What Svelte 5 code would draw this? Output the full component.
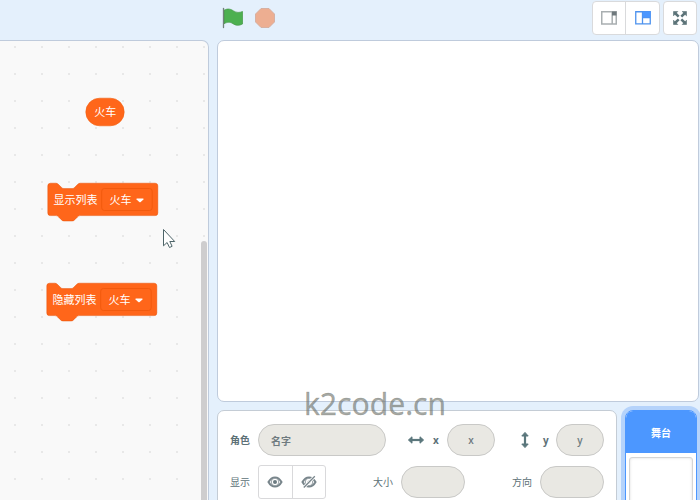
<script>
  const blocks = [
    { x: 47.8, y: 183.2, label: '显示列表', value: '火车' },
    { x: 46.8, y: 283.2, label: '隐藏列表', value: '火车' }
  ];
  const notchBlock =
    'M0,4 A4,4 0 0 1 4,0 H12 c2,0 3,1 4,2 l4,4 c1,1 2,2 4,2 h12 c2,0 3,-1 4,-2 l4,-4 c1,-1 2,-2 4,-2 H159 a4,4 0 0 1 4,4 v40 a4,4 0 0 1 -4,4 H48 c-2,0 -3,1 -4,2 l-4,4 c-1,1 -2,2 -4,2 h-12 c-2,0 -3,-1 -4,-2 l-4,-4 c-1,-1 -2,-2 -4,-2 H4 a4,4 0 0 1 -4,-4 z';
</script>

<div class="app">
  <section class="left">
    <div class="workspace">
      <svg class="canvas" width="208" height="459" viewBox="0 41 208 459">
        <defs>
          <pattern id="dots" x="14" y="46" width="27" height="27" patternUnits="userSpaceOnUse">
            <rect width="2" height="2" fill="#e8e8e8" />
          </pattern>
        </defs>
        <rect y="41" width="208" height="459" fill="url(#dots)" />
        <rect x="85.8" y="98.2" width="38.4" height="27.600" rx="13.8" fill="#ff661a" stroke="#f2600f" stroke-width=".6" />
        <text x="94.300" y="116">火车</text>
        {#each blocks as b}
          <g transform="translate({b.x} {b.y})">
            <path d={notchBlock} transform="scale(.675)" fill="#ff661a" stroke="#e64d00" stroke-width=".7" />
            <text x="5.6" y="21">{b.label}</text>
            <rect x="53.9" y="5.3" width="50.5" height="22" rx="2.7" fill="#ff661a" stroke="#f25a0e" />
            <text x="61.8" y="21">{b.value}</text>
            <path d="M89 15.2h6.4q.8.5.2 1.2l-2.7 2.5q-.7.5-1.4 0l-2.7-2.5q-.5-.7.2-1.2z" fill="#fff" />
          </g>
        {/each}
        <rect x="201" y="241" width="6" height="270" rx="3" fill="#cecdce" />
        <path d="M163.5 229.5v16.3l3.6-3.3 2.4 5 2.6-1.2-2.3-4.8h4.9z" fill="#fff" stroke="#4d6468" />
      </svg>
    </div>
  </section>

  <section class="right">
    <header>
      <div class="controls">
        <svg width="22" height="22" viewBox="0 0 22 22">
          <path d="M2 3.2C6 1.2 8.500 2 11.500 3.900s6 1.900 9 .6v12.500c-3.500 1.900-6.500 1.700-9.500-.3s-5.500-1.700-9 0z" fill="#4cb050" stroke="#459645" stroke-width=".7" />
          <path d="M1.500 1.500v19" stroke="#71817a" stroke-width="1.300" stroke-linecap="round" />
        </svg>
        <svg width="22" height="22" viewBox="0 0 22 22">
          <path d="M7 1.500h8L20.500 7v8L15 20.500H7L1.500 15V7z" fill="#edae91" stroke="#d1aa99" stroke-width=".8" stroke-linejoin="round" />
        </svg>
      </div>
      <div class="sizes">
        <div class="group">
          <button class="first" aria-label="小舞台">
            <svg width="16" height="14" viewBox="0 0 16 14">
              <path d="M.75.75h14.500v12.200H.75zM11.200.75v12.200" fill="none" stroke="#a9afb1" stroke-width="1.500" />
              <path d="M11 .5h4.500v4H11z" fill="#6f797d" />
            </svg>
          </button>
          <button aria-label="大舞台">
            <svg width="16" height="14" viewBox="0 0 16 14">
              <path d="M.75.75h14.500v12.200H.75zM7.500.75v12.200M7.500 6.500h8" fill="none" stroke="#4d92ee" stroke-width="1.300" />
              <path d="M7.500.5h8v6h-8z" fill="#4c97ff" />
            </svg>
          </button>
        </div>
        <div class="group">
          <button class="full" aria-label="全屏">
            <svg width="14" height="14" viewBox="0 0 14 14">
              <g fill="#5d7479" stroke="#5d7479">
                <path d="M2 2l3.700 3.700M12 2L8.300 5.700M2 12l3.700-3.700M12 12L8.300 8.300" stroke-width="2.500" />
                <path d="M.5.5h4.300l-4.300 4.300zM13.500.5v4.300L9.200.5zM.5 13.500V9.200l4.300 4.300zM13.500 13.500H9.200l4.300-4.300z" stroke-width=".6" />
              </g>
            </svg>
          </button>
        </div>
      </div>
    </header>

    <div class="stage"></div>

    <div class="bottom">
      <div class="sprite">
        <div class="row">
          <b class="lab">角色</b>
          <div class="field name">名字</div>
          <svg class="horiz" width="18" height="12" viewBox="0 0 18 12">
            <path d="M4 6h10" stroke="#5b777c" stroke-width="2.200" />
            <path d="M1.400 6L5 2.800v6.400zM16.600 6L13 2.800v6.400z" fill="#5b777c" stroke="#5b777c" stroke-linejoin="round" />
          </svg>
          <b class="axis">x</b>
          <div class="field small">x</div>
          <svg class="vert" width="12" height="18" viewBox="0 0 12 18">
            <path d="M6 4v10" stroke="#5b777c" stroke-width="2.200" />
            <path d="M6 1.400L2.800 5h6.400zM6 16.600L2.800 13h6.400z" fill="#5b777c" stroke="#5b777c" stroke-linejoin="round" />
          </svg>
          <b class="axis y">y</b>
          <div class="field small">y</div>
        </div>
        <div class="row second">
          <span class="lab">显示</span>
          <div class="eyes">
            <span>
              <svg width="16" height="14" viewBox="0 0 16 14">
                <path d="M1.500 7Q4 2.400 8 2.400T14.500 7Q12 11.600 8 11.600T1.500 7z" fill="none" stroke="#78858b" stroke-width="2" />
                <circle cx="8" cy="7" r="3.800" fill="#fff" stroke="#78858b" stroke-width=".8" />
                <circle cx="8" cy="7" r="2" fill="#6c7b81" />
              </svg>
            </span>
            <span>
              <svg width="16" height="14" viewBox="0 0 16 14">
                <path d="M1.500 7Q4 2.400 8 2.400T14.500 7Q12 11.600 8 11.600T1.500 7z" fill="none" stroke="#78858b" stroke-width="2" />
                <circle cx="8" cy="7" r="3.800" fill="#fff" stroke="#78858b" stroke-width=".8" />
                <circle cx="8" cy="7" r="1.500" fill="#6c7b81" />
                <path d="M3 12.300L13.600 1.500" stroke="#fff" stroke-width="3" />
                <path d="M2.800 12.500L13.800 1.300" stroke="#78858b" stroke-width="1.300" />
              </svg>
            </span>
          </div>
          <span class="lab size">大小</span>
          <div class="field mid"></div>
          <span class="lab dir">方向</span>
          <div class="field mid"></div>
        </div>
      </div>
      <div class="selector">
        <div class="title">舞台</div>
        <div class="thumb"></div>
      </div>
    </div>
    <div class="mark">k2code.cn</div>
  </section>
</div>

<style>
  :global(body) { margin: 0; overflow: hidden; }
  .app {
    width: 700px; height: 500px; overflow: hidden; display: flex; gap: 8px;
    position: relative; background: #e4f0fc; color: #5d7177;
    font: 10px "Open Sans", "Noto Sans CJK SC", sans-serif; box-sizing: border-box;
  }
  .left { width: 209px; padding-top: 40px; box-sizing: border-box; flex: none; }
  .workspace {
    height: 470px; border: 1px solid #bfcbdc; border-left: 0; border-radius: 0 7px 0 0;
    background: #f9f9f9; overflow: hidden; box-sizing: border-box;
  }
  .canvas { display: block; }
  .canvas text { font: 11px "Noto Sans CJK SC", sans-serif; fill: #fff; }
  .right { width: 483px; display: flex; flex-direction: column; flex: none; }
  header { height: 40px; flex: none; display: flex; justify-content: space-between; }
  .controls { display: flex; gap: 10px; padding: 7px 0 0 5px; }
  .controls svg { display: block; }
  .sizes { display: flex; gap: 3px; padding: 1px 3px 0 0; }
  .group {
    display: flex; height: 34px; background: #fff; border: 1px solid #d9dadc;
    border-radius: 4px; box-sizing: border-box;
  }
  button {
    width: 34px; padding: 0; border: 0; background: none; display: flex;
    align-items: center; justify-content: center; box-sizing: border-box;
  }
  button + button { border-left: 1px solid #d9dadc; }
  .first { width: 32px; }
  .full { width: 32px; }
  .stage {
    width: 482px; height: 362px; flex: none; box-sizing: border-box; background: #fff;
    border: 1px solid #bfcbdc; border-radius: 7px;
  }
  .bottom { display: flex; gap: 8px; padding-top: 8px; height: 90px; box-sizing: border-box; }
  .sprite {
    width: 400px; height: 110px; flex: none; box-sizing: border-box; background: #fff;
    border: 1px solid #c4ccd5; border-radius: 7px 7px 0 0; padding: 13px 0 0 12px;
  }
  .row { display: flex; height: 32px; align-items: center; }
  .second { margin-top: 9px; height: 34px; }
  .lab { width: 28px; flex: none; line-height: 16px; }
  .field {
    height: 32px; box-sizing: border-box; border: 1px solid #c9c9c7; border-radius: 16px;
    background: #e9e8e3; display: flex; align-items: center; flex: none; color: #6f7b80;
    font-weight: 500;
  }
  .name { width: 128px; padding-left: 12px; font-weight: 600; }
  .small { width: 48px; justify-content: center; font-weight: 600; }
  .mid { width: 64px; }
  .horiz { margin-left: 21px; flex: none; }
  .axis { width: 14px; margin-left: 8px; font-weight: 700; flex: none; }
  .vert { margin-left: 24px; flex: none; }
  .axis.y { margin-left: 12px; width: 13px; }
  .eyes {
    display: flex; width: 68px; height: 34px; box-sizing: border-box; flex: none;
    border: 1px solid #d9d9db; border-radius: 3px;
  }
  .eyes span { flex: 1; display: flex; align-items: center; justify-content: center; }
  .eyes span + span { border-left: 1px solid #d9d9db; }
  .size { margin-left: 47px; }
  .dir { margin-left: 47px; }
  .selector {
    width: 72px; height: 130px; box-sizing: border-box; background: #fff; flex: none;
    border: 1px solid #4c97ff; border-radius: 8px; box-shadow: 0 0 0 4px #b5d3fb;
    display: flex; flex-direction: column; align-items: center;
  }
  .title {
    width: 70px; height: 42px; flex: none; background: #4c97ff; color: #fff; font-weight: bold;
    display: flex; align-items: center; justify-content: center; border-radius: 7px 7px 0 0;
  }
  .thumb {
    width: 64px; height: 70px; flex: none; margin-top: 4px; box-sizing: border-box;
    border: 1px solid #d5d5d5; border-radius: 3px; box-shadow: inset 0 0 3px #ddd;
  }
  .mark {
    position: absolute; left: 304px; top: 384px; font: 30.2px/40px "Open Sans", sans-serif;
    color: rgba(112, 116, 108, .65); white-space: nowrap;
    -webkit-text-stroke: .4px rgba(112, 116, 108, .5);
  }
</style>
